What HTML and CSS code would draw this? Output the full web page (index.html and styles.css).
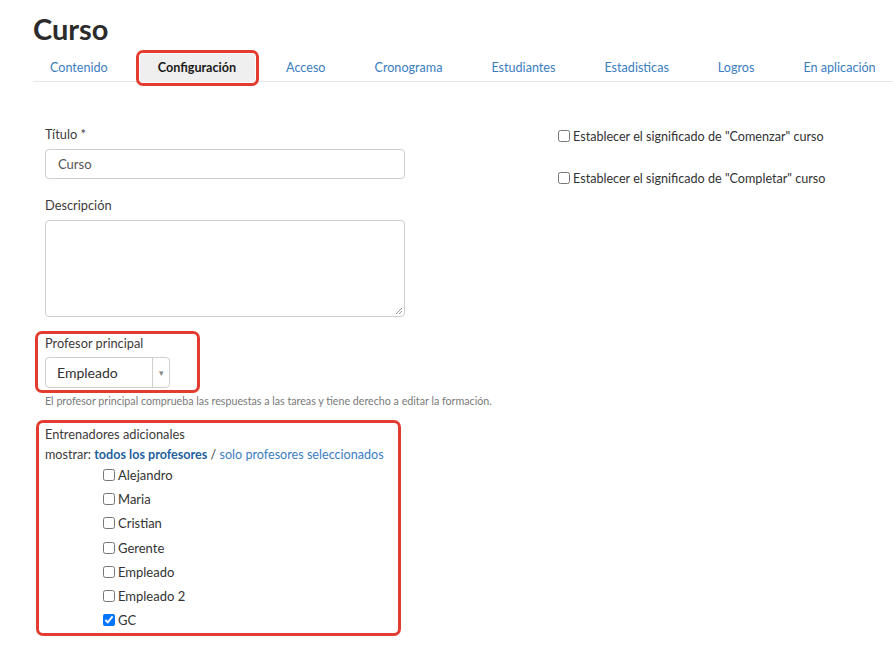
FILE: index.html
```html
<!DOCTYPE html>
<html lang="es">
<head>
<meta charset="utf-8">
<title>Curso</title>
<link rel="stylesheet" href="styles.css">
</head>
<body>
<div class="page">
  <h1 class="title">Curso</h1>
  <nav class="tabs">
    <a class="tab">Contenido</a>
    <a class="tab tab-active">Configuración</a>
    <a class="tab">Acceso</a>
    <a class="tab">Cronograma</a>
    <a class="tab">Estudiantes</a>
    <a class="tab">Estadisticas</a>
    <a class="tab">Logros</a>
    <a class="tab">En aplicación</a>
  </nav>
  <div class="content">
    <div class="col-left">
      <label class="label">Título *</label>
      <div class="input">Curso</div>
      <label class="label label-desc">Descripción</label>
      <div class="textarea">
        <svg class="grip" width="8" height="8" viewBox="0 0 8 8"><path d="M7 1 L1 7 M7 4 L4 7" stroke="#999" stroke-width="1"/></svg>
      </div>
      <div class="mark mark-teacher">
        <label class="label">Profesor principal</label>
        <div class="select">
          <span class="select-value">Empleado</span>
          <span class="select-arrow">▾</span>
        </div>
      </div>
      <p class="help">El profesor principal comprueba las respuestas a las tareas y tiene derecho a editar la formación.</p>
      <div class="mark mark-trainers">
        <label class="label">Entrenadores adicionales</label>
        <div class="show">mostrar: <a class="show-all">todos los profesores</a> / <a class="show-sel">solo profesores seleccionados</a></div>
        <ul class="checklist">
          <li><input type="checkbox"><span>Alejandro</span></li>
          <li><input type="checkbox"><span>Maria</span></li>
          <li><input type="checkbox"><span>Cristian</span></li>
          <li><input type="checkbox"><span>Gerente</span></li>
          <li><input type="checkbox"><span>Empleado</span></li>
          <li><input type="checkbox"><span>Empleado 2</span></li>
          <li><input type="checkbox" checked><span>GC</span></li>
        </ul>
      </div>
    </div>
    <div class="col-right">
      <div class="opt"><input type="checkbox"><span>Establecer el significado de "Comenzar" curso</span></div>
      <div class="opt"><input type="checkbox"><span>Establecer el significado de "Completar" curso</span></div>
    </div>
  </div>
</div>
</body>
</html>
```

FILE: styles.css
```css
html, body {
  margin: 0;
  padding: 0;
  background: #fff;
}
body {
  font-family: Lato, "Liberation Sans", sans-serif;
  color: #333;
  font-size: 13px;
}
.page {
  padding: 10px 0 0 33px;
}
.title {
  margin: 0;
  font-size: 29px;
  line-height: 38px;
  font-weight: 700;
  color: #2b2b2b;
}
.tabs {
  display: flex;
  gap: 14px;
  margin-top: 6px;
  border-bottom: 1px solid #e6e6e6;
  height: 27px;
}
.tab {
  display: block;
  padding: 0 18px 0 17px;
  height: 28px;
  line-height: 28px;
  font-size: 12.6px;
  color: #3b7dbf;
  white-space: nowrap;
}
.tab-active {
  padding: 0 19px 0 18px;
  background: #efefef;
  color: #1a1a1a;
  font-weight: 700;
  border-radius: 3px;
  outline: 3px solid #e23c30;
  outline-offset: 1px;
}
.content {
  display: flex;
  padding: 44px 0 0 12px;
}
.col-left {
  width: 360px;
  display: flex;
  flex-direction: column;
  align-items: flex-start;
}
.label {
  display: block;
  font-size: 12.8px;
  line-height: 16px;
  color: #3d3a3a;
}
.input {
  box-sizing: border-box;
  margin-top: 7px;
  width: 360px;
  height: 30px;
  border: 1px solid #cfcfcf;
  border-radius: 4px;
  padding: 0 12px;
  line-height: 28px;
  font-size: 13px;
  color: #555;
}
.label-desc {
  margin-top: 18px;
}
.textarea {
  box-sizing: border-box;
  position: relative;
  margin-top: 7px;
  width: 360px;
  height: 97px;
  border: 1px solid #cfcfcf;
  border-radius: 4px;
}
.grip {
  position: absolute;
  right: 1px;
  bottom: 1px;
}
.mark {
  border: 3px solid #e23c30;
  border-radius: 7px;
}
.mark-teacher {
  margin: 14px 0 0 -10px;
  padding: 1px 27px 2px 7px;
}
.select {
  display: flex;
  box-sizing: border-box;
  margin-top: 6px;
  width: 125px;
  height: 31px;
  border: 1px solid #cfcfcf;
  border-radius: 4px;
}
.select-value {
  flex: 1;
  padding-left: 11px;
  line-height: 29px;
  font-size: 14px;
  color: #333;
}
.select-arrow {
  width: 16px;
  border-left: 1px solid #cfcfcf;
  text-align: center;
  line-height: 29px;
  font-size: 9px;
  color: #888;
}
.help {
  margin: 1px 0 0;
  font-size: 10.7px;
  line-height: 13px;
  color: #7a7a7a;
  white-space: nowrap;
}
.mark-trainers {
  box-sizing: border-box;
  width: 365px;
  margin: 13px 0 0 -9px;
  padding: 3px 6px 1px 6px;
}
.show {
  margin-top: 5px;
  line-height: 16px;
  font-size: 12.6px;
  color: #3d3a3a;
  white-space: nowrap;
}
.show-all {
  font-weight: 700;
  color: #1f5f9e;
}
.show-sel {
  color: #3b7dbf;
}
.checklist {
  list-style: none;
  margin: 0;
  padding: 0 0 0 58px;
}
.checklist li {
  display: flex;
  align-items: center;
  height: 24.2px;
}
input[type="checkbox"] {
  width: 12px;
  height: 12px;
  margin: 0 3px 0 0;
}
.col-right {
  margin-left: 153px;
  padding-top: 2px;
}
.opt {
  display: flex;
  align-items: center;
  height: 16px;
  margin-bottom: 26px;
  font-size: 12.6px;
  color: #333;
  white-space: nowrap;
}
```
